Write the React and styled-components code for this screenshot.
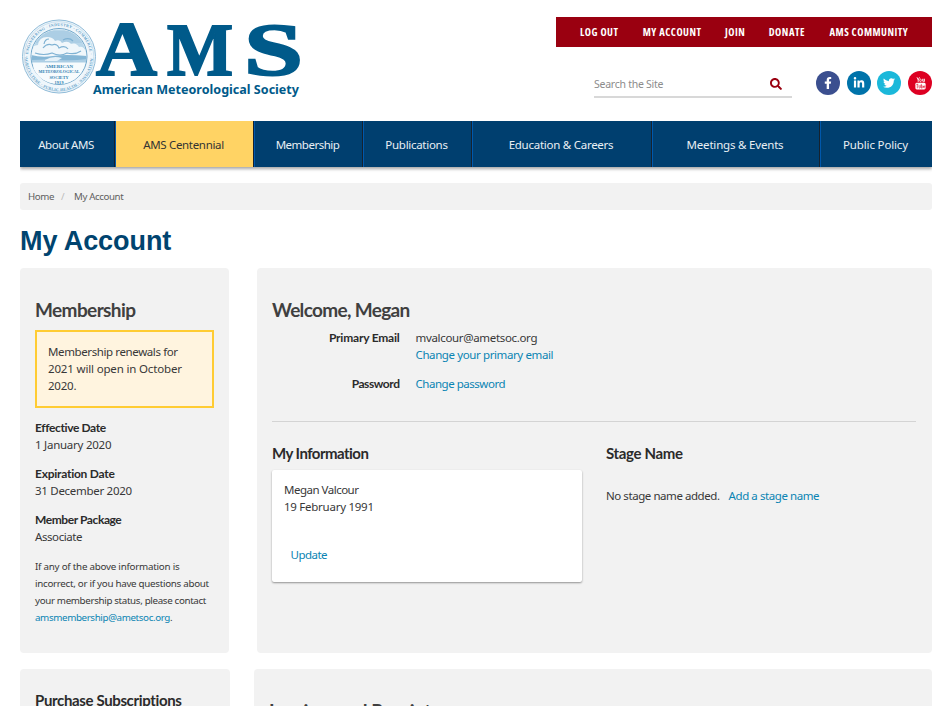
import React from "react";
import styled, { createGlobalStyle } from "styled-components";
import { FaFacebookF, FaLinkedinIn, FaTwitter, FaSearch } from "react-icons/fa";

const GlobalStyle = createGlobalStyle`
  * { box-sizing: border-box; }
  html, body { margin: 0; padding: 0; background: #fff; overflow: hidden; }
  body { font: 400 11.5px/17px "Noto Sans", sans-serif; color: #383838; }
  h1, h2, h3, p, dl, dt, dd, ul { margin: 0; padding: 0; }
  ul { list-style: none; }
`;

const Page = styled.div`
  width: 942px;
  height: 706px;
  overflow: hidden;
  padding: 17px 10px 0 20px;
`;
const Header = styled.header`
  display: flex;
  justify-content: space-between;
  height: 104px;
`;
const Logo = styled.svg`
  display: block;
  width: 284px;
  height: 86px;
  overflow: visible;
`;
const Tools = styled.div`
  width: 376px;
  display: flex;
  flex-direction: column;
`;
const UtilityBar = styled.nav`
  height: 30px;
  background: #9a0010;
  display: flex;
  justify-content: space-between;
  padding: 0 24px;
`;
const UtilityLink = styled.a`
  color: #fff;
  font: 700 10.5px/31px "Open Sans", sans-serif;
  font-stretch: 75%;
  width: ${(p) => p.$w}px;
  letter-spacing: 0.5px;
  white-space: nowrap;
`;
const ToolRow = styled.div`
  display: flex;
  justify-content: space-between;
  padding: 24px 0 0 38px;
`;
const SearchField = styled.div`
  width: 198px;
  height: 27px;
  border-bottom: 2px solid #d8d8d8;
  display: flex;
  justify-content: space-between;
  padding: 0 10px 0 0;
  font-size: 10.5px;
  line-height: 27px;
  letter-spacing: -0.26px;
  color: #8c8c8c;
`;
const SearchIcon = styled(FaSearch)`
  width: 12px;
  height: 12px;
  margin-top: 7px;
  color: #9a0010;
`;
const Socials = styled.div`
  display: flex;
  gap: 6.6px;
`;
const Social = styled.a`
  width: 24px;
  height: 24px;
  border-radius: 50%;
  background: ${(p) => p.$bg};
  color: #fff;
  font-size: 12px;
  display: flex;
  align-items: center;
  justify-content: center;
`;
const MainNav = styled.nav`
  display: flex;
  height: 46px;
  box-shadow: 0 2px 3px rgba(0, 0, 0, 0.35);
  clip-path: inset(0 0 -6px 0);
`;
const NavItem = styled.a`
  width: ${(p) => p.$w}px;
  background: ${(p) => (p.$active ? "#ffd364" : "#003f6f")};
  color: ${(p) => (p.$active ? "#333" : "#e9eff4")};
  letter-spacing: ${(p) => p.$ls}px;
  line-height: 48px;
  padding-right: 2px;
  text-align: center;
  white-space: nowrap;
  border-right: 1px solid #16222e;
  border-left: 1px solid #0058ac;
  &:first-child { border-left: 0; }
  &:last-child { border-right: 0; }
`;
const Breadcrumb = styled.div`
  margin-top: 16px;
  height: 27px;
  border-radius: 3px;
  background: #f2f2f2;
  padding-left: 8px;
  display: flex;
  font-size: 9.7px;
  line-height: 27px;
  letter-spacing: -0.38px;
  color: #606060;
`;
const Slash = styled.span`
  color: #bbb;
  width: 20px;
  padding-left: 7px;
`;
const PageTitle = styled.h1`
  font: 700 27px/32px "Liberation Sans", sans-serif;
  letter-spacing: -0.08px;
  color: #00446f;
  margin-top: 15px;
  height: 43px;
`;
const Columns = styled.div`
  display: flex;
  justify-content: space-between;
  margin-bottom: 16px;
`;
const Panel = styled.section`
  width: ${(p) => p.$w}px;
  height: 385px;
  background: #f2f2f2;
  border-radius: 4px;
  padding: ${(p) => p.$pt || 28}px 15px 0;
`;
const Heading = styled.h2`
  font: 700 19px/28px Lato, sans-serif;
  letter-spacing: ${(p) => p.$ls}px;
  color: #404040;
  white-space: nowrap;
`;
const SubHeading = styled.h3`
  font: 700 15px/20px Lato, sans-serif;
  letter-spacing: ${(p) => p.$ls}px;
  color: #2b2b2b;
  white-space: nowrap;
`;
const Notice = styled.div`
  width: 179px;
  height: 78px;
  margin: 6px 0 11px;
  border: 2px solid #ffcc33;
  background: #fff4df;
  padding: 11px;
`;
const Line = styled.div`
  letter-spacing: ${(p) => p.$ls || 0}px;
  white-space: nowrap;
`;
const Fact = styled.div`
  margin-bottom: 12px;
`;
const Label = styled.div`
  font: 700 12px/17px Lato, sans-serif;
  letter-spacing: ${(p) => p.$ls}px;
  color: #2b2b2b;
`;
const FinePrint = styled.p`
  margin-top: 13px;
  font-size: 9.8px;
`;
const Link = styled.a`
  color: #0a84b3;
  letter-spacing: ${(p) => p.$ls || 0}px;
  white-space: nowrap;
`;
const Details = styled.dl`
  display: grid;
  grid-template-columns: 127.5px 1fr;
  column-gap: 16px;
  row-gap: 12px;
  margin-top: 5px;
  dt { text-align: right; }
`;
const Divider = styled.div`
  height: 1px;
  width: 644px;
  margin-top: 29px;
  background: #d4d4d4;
`;
const InfoGrid = styled.div`
  display: grid;
  grid-template-columns: 310px 1fr;
  column-gap: 24px;
  margin-top: 21px;
`;
const Card = styled.div`
  height: 112px;
  margin-top: 7px;
  padding: 11px 12px;
  background: #fff;
  border-radius: 2px;
  box-shadow: 0 1px 2px rgba(0, 0, 0, 0.4);
`;
const CardAction = styled.div`
  padding: 31px 0 0 6.5px;
`;
const StageRow = styled.div`
  display: flex;
  gap: 9px;
  margin-top: 24px;
`;

function AmsLogo() {
  return (
    <Logo viewBox="20 17 284 86">
      <defs>
        <path id="ringTop" d="M28 57 a31 31 0 1 1 62 0" />
        <path id="ringBottom" d="M25 57 a34 34 0 0 0 68 0" />
        <clipPath id="disc"><circle cx="59" cy="57" r="27.5" /></clipPath>
      </defs>
      <circle cx="59" cy="56.5" r="36.5" fill="#eff6fb" stroke="#8fbbd8" strokeWidth="1" />
      <circle cx="59" cy="56.5" r="34.8" fill="none" stroke="#b9d6e8" strokeWidth=".7" />
      <circle cx="59" cy="56.5" r="28" fill="#f4f9fc" stroke="#6da5c9" strokeWidth="1" />
      <g clipPath="url(#disc)">
        <rect x="30" y="28" width="58" height="36" fill="#b9d7ea" />
        <path d="M30 32h58M30 34h58M30 36h58M30 38h58M30 40h58M30 42h58M30 58h58M30 60h58M30 62h58" stroke="#8fbbd8" strokeWidth=".6" />
        <path d="M31 51q1-6 7-6 1-8 9-8 6 0 8 4 5-2 7 2 6-3 9 1 5-2 8 3 5-1 7 5v4q-8 3-16 1-8 4-16 1-10 3-23-1z" fill="#f0f7fb" />
        <path d="M43 48q4-5 9-3 5-2 7 3 6-3 9 1M35 53q9 3 17 0 8 4 15 0 8 2 14-2M63 40q6-3 10 1M49 39q-4 0-5 5" fill="none" stroke="#7fb2d3" strokeWidth="1.2" />
        <path d="M31 55q11 3 22 1t34 0v3q-15 2-27 1t-29 0z" fill="#86b7d6" />
        <path d="M45 60q8-5 17-2l-5 3h-12z" fill="#e5f1f8" />
      </g>
      <path d="M32.500 62.500h53l-2.500 7q-7 14-24 14.500-18-.5-25-14.500z" fill="#f7fbfd" />
      <g fill="#2f7fb0" fontFamily="Liberation Serif, serif" fontWeight="700" fontSize="4.6" textAnchor="middle">
        <text x="59" y="68" textLength="28" lengthAdjust="spacingAndGlyphs">AMERICAN</text>
        <text x="59" y="73.300" textLength="41" lengthAdjust="spacingAndGlyphs">METEOROLOGICAL</text>
        <text x="59" y="78.600" textLength="19" lengthAdjust="spacingAndGlyphs">SOCIETY</text>
        <text x="59" y="83.600" fontSize="4.2" textLength="9">1919</text>
      </g>
      <g fill="#5f9fc8" fontFamily="Liberation Serif, serif" fontWeight="700" fontSize="4">
        <text><textPath href="#ringTop" textLength="95">· ENGINEERING · INDUSTRY · COMMERCE ·</textPath></text>
        <text><textPath href="#ringBottom" textLength="105">AGRICULTURE · PUBLIC HEALTH · NAVIGATION</textPath></text>
      </g>
      <g fill="#005a8a" stroke="#005a8a" strokeWidth="2" fontFamily="Liberation Serif, serif" fontWeight="700">
        <text x="96" y="74.5" fontSize="79" textLength="61" lengthAdjust="spacingAndGlyphs">A</text>
        <text x="167" y="74.5" fontSize="75" textLength="66" lengthAdjust="spacingAndGlyphs">M</text>
        <text x="244" y="74.5" fontSize="74" textLength="59" lengthAdjust="spacingAndGlyphs">S</text>
      </g>
      <text x="93" y="94" fill="#005a8a" fontFamily="Noto Sans, sans-serif" fontWeight="700" fontSize="13" textLength="206" lengthAdjust="spacingAndGlyphs">
        American Meteorological Society
      </text>
    </Logo>
  );
}

function YouTubeMark() {
  return (
    <svg width="11" height="13" viewBox="0 0 11 13">
      <path d="M2 .3l1.2 2.6v2M4.500.3L3.200 2.900" fill="none" stroke="#fff" strokeWidth=".9" />
      <ellipse cx="5.5" cy="3.4" rx=".8" ry="1.3" fill="none" stroke="#fff" strokeWidth=".8" />
      <path d="M7.6 1.8v2.400q.8 1 1.600 0V1.800v3.100" fill="none" stroke="#fff" strokeWidth=".8" />
      <rect x=".4" y="5.8" width="10.2" height="6.7" rx="1.4" fill="#fff" />
      <path d="M1.300 7.300h2M2.300 7.300v4M4 8.200v2.400q.6.800 1.300 0V8.200M6.300 6.900v4.200h.9V8.700h-.9M9.800 10.400q-.8 1.400-1.300 0V9q.6-1 1.200 0v.7H8.500" fill="none" stroke="#dd0022" strokeWidth=".6" />
    </svg>
  );
}

const utility = [
  ["LOG OUT", 39], ["MY ACCOUNT", 58.5], ["JOIN", 20],
  ["DONATE", 37], ["AMS COMMUNITY", 78.5],
];
const nav = [
  ["About AMS", 95, -0.46], ["AMS Centennial", 139, -0.32], ["Membership", 109, -0.5],
  ["Publications", 109, -0.29], ["Education & Careers", 180, -0.26],
  ["Meetings & Events", 168, -0.19], ["Public Policy", 112, -0.15],
];
const facts = [
  ["Effective Date", -0.38, "1 January 2020", -0.25],
  ["Expiration Date", -0.25, "31 December 2020", -0.29],
  ["Member Package", -0.42, "Associate", -0.42],
];

export default function App() {
  return (
    <Page>
      <GlobalStyle />
      <Header>
        <AmsLogo />
        <Tools>
          <UtilityBar>
            {utility.map(([t, w]) => <UtilityLink key={t} $w={w}>{t}</UtilityLink>)}
          </UtilityBar>
          <ToolRow>
            <SearchField>Search the Site<SearchIcon /></SearchField>
            <Socials>
              <Social $bg="#3b4f8f"><FaFacebookF /></Social>
              <Social $bg="#0073aa"><FaLinkedinIn /></Social>
              <Social $bg="#1bb8da"><FaTwitter /></Social>
              <Social $bg="#dd0022"><YouTubeMark /></Social>
            </Socials>
          </ToolRow>
        </Tools>
      </Header>
      <MainNav>
        {nav.map(([t, w, ls], i) => <NavItem key={t} $w={w} $ls={ls} $active={i === 1}>{t}</NavItem>)}
      </MainNav>
      <Breadcrumb><span>Home</span><Slash>/</Slash><span>My Account</span></Breadcrumb>
      <PageTitle>My Account</PageTitle>
      <Columns>
        <Panel $w={209}>
          <Heading $ls={-0.6}>Membership</Heading>
          <Notice>
            <Line $ls={-0.39}>Membership renewals for</Line>
            <Line $ls={-0.16}>2021 will open in October</Line>
            <Line $ls={-0.22}>2020.</Line>
          </Notice>
          {facts.map(([label, a, value, b]) => (
            <Fact key={label}><Label $ls={a}>{label}</Label><Line $ls={b}>{value}</Line></Fact>
          ))}
          <FinePrint>
            <Line as="span" $ls={-0.24}>If any of the above information is</Line><br />
            <Line as="span" $ls={-0.29}>incorrect, or if you have questions about</Line><br />
            <Line as="span" $ls={-0.35}>your membership status, please contact</Line><br />
            <Link $ls={-0.38}>amsmembership@ametsoc.org</Link>.
          </FinePrint>
        </Panel>
        <Panel $w={675}>
          <Heading $ls={-0.67}>Welcome, Megan</Heading>
          <Details>
            <Label as="dt" $ls={-0.22}>Primary Email</Label>
            <dd>
              <Line $ls={-0.33}>mvalcour@ametsoc.org</Line>
              <Link $ls={-0.39}>Change your primary email</Link>
            </dd>
            <Label as="dt" $ls={-0.45}>Password</Label>
            <dd><Link $ls={-0.47}>Change password</Link></dd>
          </Details>
          <Divider />
          <InfoGrid>
            <div>
              <SubHeading $ls={-0.53}>My Information</SubHeading>
              <Card>
                <Line $ls={-0.5}>Megan Valcour</Line>
                <Line $ls={-0.26}>19 February 1991</Line>
                <CardAction><Link $ls={-0.53}>Update</Link></CardAction>
              </Card>
            </div>
            <div>
              <SubHeading $ls={-0.34}>Stage Name</SubHeading>
              <StageRow>
                <Line $ls={-0.44}>No stage name added.</Line>
                <Link $ls={-0.43}>Add a stage name</Link>
              </StageRow>
            </div>
          </InfoGrid>
        </Panel>
      </Columns>
      <Columns>
        <Panel $w={210} $pt={21}><SubHeading $ls={-0.36}>Purchase Subscriptions</SubHeading></Panel>
        <Panel $w={678} $pt={28}><Heading $ls={-0.55}>Invoices and Receipts</Heading></Panel>
      </Columns>
    </Page>
  );
}
